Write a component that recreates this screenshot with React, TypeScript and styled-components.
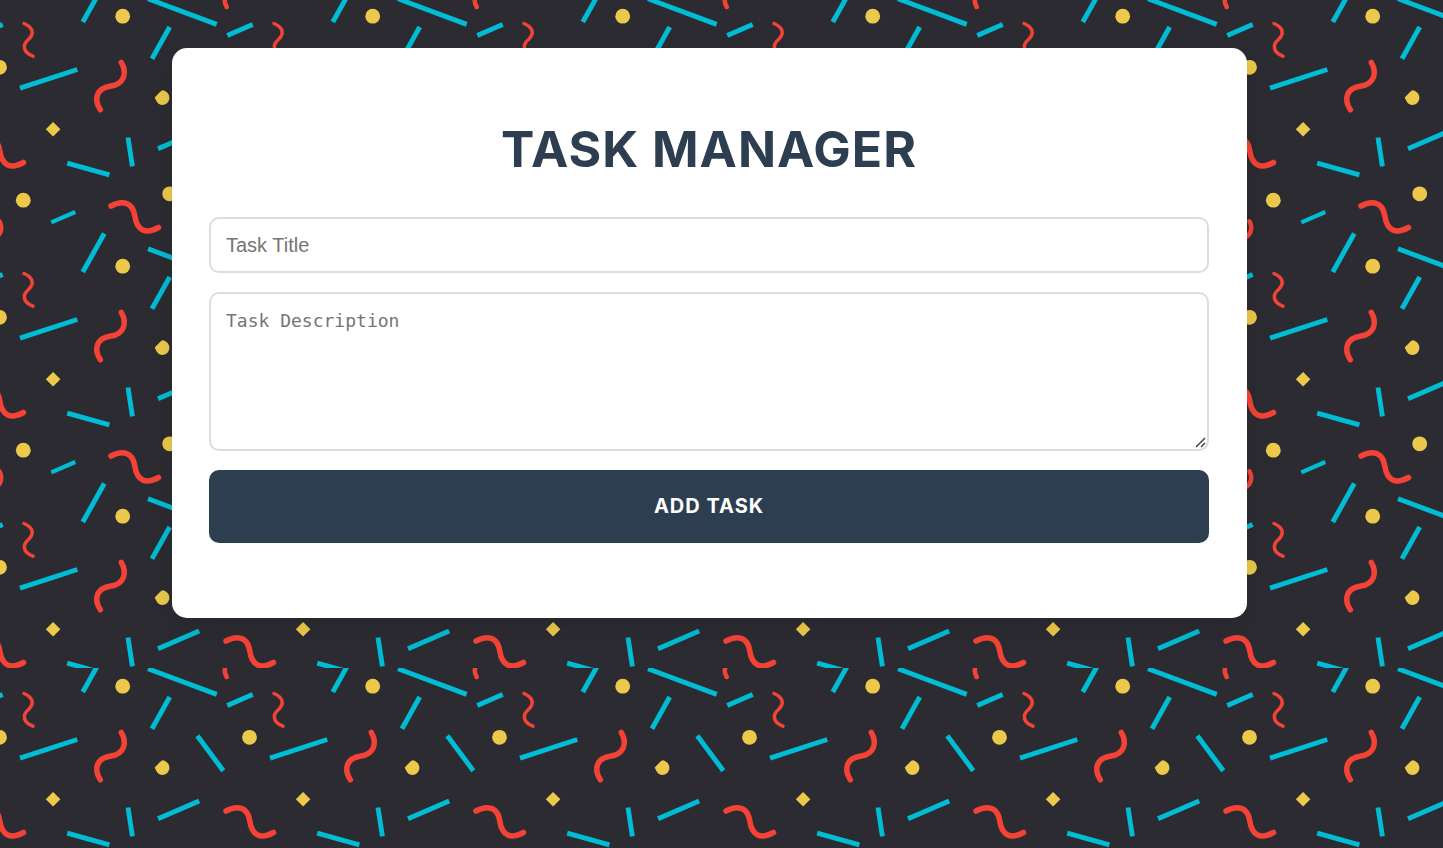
import React from 'react';
import styled, { createGlobalStyle } from 'styled-components';

const GlobalStyle = createGlobalStyle`
  *, *::before, *::after { box-sizing: border-box; }
  body {
    margin: 0;
    background: #2b2b31;
    font-family: Inter, "Liberation Sans", sans-serif;
  }
`;

const Page = styled.main`
  position: relative;
  min-height: 100vh;
  padding: 48px 196px 48px 172px;
`;

const Backdrop = styled.svg`
  position: absolute;
  inset: 0;
  width: 100%;
  height: 100%;
`;

const Card = styled.section`
  position: relative;
  padding: 71px 38px 75px 37px;
  border-radius: 15px;
  background: #fff;
  box-shadow: 0 10px 30px rgba(0, 0, 0, 0.1);
`;

const Title = styled.h1`
  margin: 0 0 38px;
  color: #2c3e50;
  font-size: 50px;
  font-weight: 700;
  line-height: 60px;
  letter-spacing: 1px;
  text-align: center;
  text-transform: uppercase;
`;

const Form = styled.form`
  display: flex;
  flex-direction: column;
  gap: 19px;
`;

const TextInput = styled.input`
  width: 100%;
  height: 56px;
  padding: 14px 15px;
  border: 2px solid #ddd;
  border-radius: 10px;
  background: #fff;
  font: 20px "Liberation Sans", Arial, sans-serif;
  &::placeholder { color: #757575; }
`;

const TextAreaBox = styled.div`
  position: relative;
`;

const TextArea = styled.textarea`
  display: block;
  width: 100%;
  height: 159px;
  padding: 15px;
  border: 2px solid #ddd;
  border-radius: 10px;
  background: #fff;
  font: 18px/23px Consolas, "DejaVu Sans Mono", monospace;
  resize: vertical;
  &::placeholder { color: #757575; }
  &::-webkit-resizer { background: transparent; }
`;

const Grip = styled.svg`
  position: absolute;
  right: 3px;
  bottom: 3px;
  pointer-events: none;
`;

const SubmitButton = styled.button`
  height: 73px;
  padding: 0 0 2px;
  border: 0;
  border-radius: 10px;
  background: #2c3e50;
  color: #fff;
  font: 700 20px Inter, "Liberation Sans", sans-serif;
  letter-spacing: 1px;
  text-transform: uppercase;
  cursor: pointer;
`;

const TILE = 250;

const wraps = [
  [0, 0],
  [-TILE, 0],
  [0, -TILE],
  [-TILE, -TILE],
];

function Shapes() {
  return (
    <g id="shapes">
      <g stroke="#00bcd4" strokeWidth="4.9" fill="none">
        <path d="M104.3 233.5 82.8 272" />
        <path d="M148 248.8 216.7 274.4" />
        <path d="M169.7 27 152 58.8" />
        <path d="M20 88.2 77.3 69.5" />
        <path d="M197.3 65.8 223.3 100.8" />
        <path d="M128 137.5 132.4 166.3" />
        <path d="M67.2 163.2 109.4 174.8" />
        <path d="M158 148.8 199.2 131" />
        <path d="M51.3 222.3 75.3 212" strokeWidth="4.1" />
        <path d="M227.3 35.5 252.7 24.5" />
      </g>
      <g fill="#ecc94b">
        <circle cx="122.7" cy="16.2" r="7.4" />
        <circle cx="249.5" cy="67.3" r="7.4" />
        <circle cx="23.3" cy="200.2" r="7.4" />
        <circle cx="169.7" cy="193.8" r="7.4" />
        <path d="M53.1 122 60.4 129.3 53.1 136.6 45.8 129.3Z" />
        <path d="M154.7 97.5 160 92Q162.2 89.3 164.5 90.7C167.5 92 169.4 94.5 169.4 97.7C169.4 101.8 166.2 104.9 162.2 104.9C158.2 104.9 156.6 101.8 154.7 97.5Z" />
      </g>
      <g stroke="#f44336" strokeWidth="5.5" strokeLinecap="round" fill="none">
        <path d="M121.3 62.3C127.5 73 124 84 111 86C97 88 93 98.5 100.3 109.8" />
        <path
          d="M24 23.5C32.5 27 35 33.5 28.5 39.5C21.5 45.5 23.5 52.5 33 56.2"
          strokeWidth="3.5"
        />
        <path d="M111 206C122 200 132.5 202 134.7 215.5C136.9 231 146 234.5 158.5 227.5" />
        <path d="M226 141C237 135 247.5 137 249.7 150.5C251.9 166 261 169.5 273.5 162.5" />
        <path
          d="M249.5 221.3C253 228 251.5 237.5 240 239C226 240.5 222 249 226.7 257"
          strokeWidth="4.5"
        />
      </g>
    </g>
  );
}

function Confetti() {
  return (
    <Backdrop aria-hidden="true">
      <defs>
        <Shapes />
        <pattern id="confetti" width={TILE} height={TILE} patternUnits="userSpaceOnUse">
          {wraps.map(([x, y]) => (
            <use key={`${x},${y}`} href="#shapes" x={x} y={y} />
          ))}
        </pattern>
      </defs>
      <rect width="100%" height="668" fill="url(#confetti)" />
      <g transform="translate(0 670)">
        <rect y="-2" width="100%" height="100%" fill="url(#confetti)" />
      </g>
    </Backdrop>
  );
}

export default function App() {
  return (
    <>
      <GlobalStyle />
      <Page>
        <Confetti />
        <Card>
          <Title>Task Manager</Title>
          <Form onSubmit={(event: React.FormEvent) => event.preventDefault()}>
            <TextInput type="text" placeholder="Task Title" aria-label="Task Title" />
            <TextAreaBox>
              <TextArea placeholder="Task Description" aria-label="Task Description" />
              <Grip width="11" height="11" stroke="#444" strokeWidth="1.5" aria-hidden="true">
                <path d="M1 10 10 1M6 10 10 6" />
              </Grip>
            </TextAreaBox>
            <SubmitButton type="submit">Add Task</SubmitButton>
          </Form>
        </Card>
      </Page>
    </>
  );
}
